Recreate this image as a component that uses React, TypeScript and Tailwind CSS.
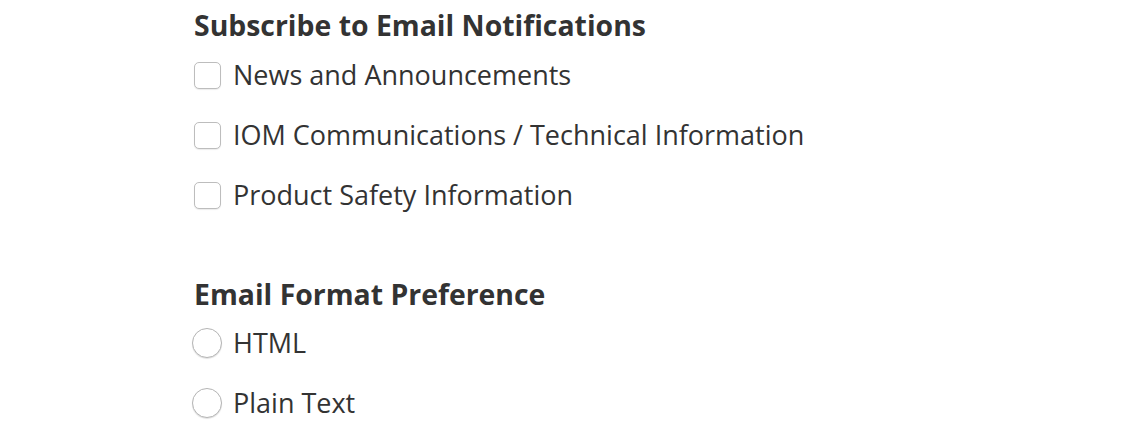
import { useState } from "react";

const topics = [
  "News and Announcements",
  "IOM Communications / Technical Information",
  "Product Safety Information",
];

const formats = ["HTML", "Plain Text"];

function Checkbox({ label }: { label: string }) {
  const [on, setOn] = useState(false);
  return (
    <label className="flex h-[26px] cursor-pointer items-center gap-[12px] pl-[2px]">
      <input
        type="checkbox"
        checked={on}
        onChange={() => setOn(!on)}
        className="h-[27px] w-[27px] appearance-none rounded-[5px] border border-[#bdbdbd] bg-white shadow-[0_1px_1px_rgba(0,0,0,0.08)]"
      />
      <span className="text-[27px] leading-[30px]">{label}</span>
    </label>
  );
}

function Radio({ label, name }: { label: string; name: string }) {
  return (
    <label className="flex h-[30px] cursor-pointer items-center gap-[11px]">
      <input
        type="radio"
        name={name}
        className="h-[30px] w-[30px] appearance-none rounded-full border border-[#b5b5b5] bg-white shadow-[0_1px_1px_rgba(0,0,0,0.12)]"
      />
      <span className="text-[27px] leading-[30px]">{label}</span>
    </label>
  );
}

export default function App() {
  return (
    <div
      className="min-h-screen bg-white pl-[192px] pt-[10px] text-[#333333]"
      style={{ fontFamily: '"Open Sans", "Noto Sans", sans-serif' }}
    >
      <h2 className="pl-[2px] text-[28.4px] font-bold leading-[30px]">
        Subscribe to Email Notifications
      </h2>
      <div className="mt-[22px] flex flex-col gap-[34px]">
        {topics.map((t) => (
          <Checkbox key={t} label={t} />
        ))}
      </div>

      <h2 className="mt-[71px] pl-[2px] text-[28.4px] font-bold leading-[30px]">
        Email Format Preference
      </h2>
      <div className="mt-[19px] flex flex-col gap-[30px]">
        {formats.map((f) => (
          <Radio key={f} label={f} name="format" />
        ))}
      </div>
    </div>
  );
}
